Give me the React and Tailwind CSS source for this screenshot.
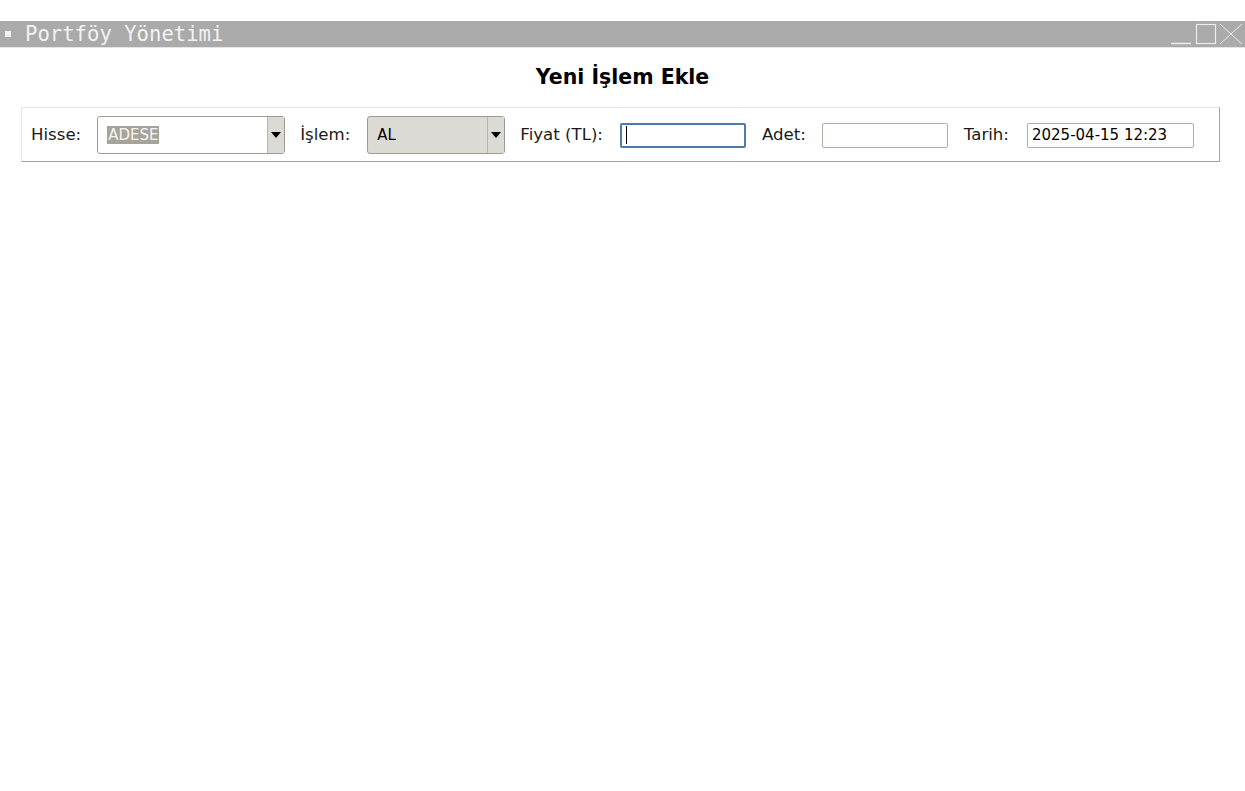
import React from "react";

const Arrow = () => (
  <svg width="10" height="6" viewBox="0 0 10 6">
    <path d="M0 0 L10 0 L5 6 Z" fill="#000" />
  </svg>
);

const Combo = ({ value, readOnly, width }) => (
  <div
    className={`flex h-[38px] items-stretch rounded-[3px] border border-[#9e9a91] ${
      readOnly ? "bg-[#dcdad5]" : "bg-white"
    }`}
    style={{ width }}
  >
    <div className="flex flex-1 items-center pl-[9px]">
      {readOnly ? (
        <span className="text-[15px] text-black">{value}</span>
      ) : (
        <span className="bg-[#a7a398] px-px text-[15px] leading-[18px] text-[#f4f4f4]">
          {value}
        </span>
      )}
    </div>
    <div className="flex w-[17px] items-center justify-center border-l border-[#b9b5ac] bg-[#dcdad5]">
      <Arrow />
    </div>
  </div>
);

const Entry = ({ value, focused, width }) => (
  <div
    className={`flex h-[25px] items-center rounded-[2px] bg-white px-[4px] text-[15px] text-black ${
      focused
        ? "border-2 border-[#5079a8]"
        : "border border-[#b3afa6]"
    }`}
    style={{ width }}
  >
    {focused && <span className="h-[18px] w-px bg-black" />}
    {value}
  </div>
);

export default function App() {
  return (
    <div
      className="h-[791px] w-[1245px] bg-white"
      style={{ fontFamily: '"DejaVu Sans", sans-serif' }}
    >
      <div className="h-[21px]" />
      {/* Window title bar */}
      <div className="flex h-[26px] items-center bg-[#aaaaaa] text-[#f2f2f2]">
        <span className="ml-[5px] mr-[14px] h-[6px] w-[6px] bg-[#f2f2f2]" />
        <span
          className="text-[20.6px] leading-none"
          style={{ fontFamily: '"DejaVu Sans Mono", monospace' }}
        >
          Portföy Yönetimi
        </span>
        <div className="ml-auto flex items-center">
          <svg width="76" height="22" viewBox="0 0 76 22">
            <path d="M2 20.5 H22" stroke="#ececec" strokeWidth="1.5" />
            <rect x="27.5" y="1.5" width="19" height="19" fill="none" stroke="#ececec" strokeWidth="1.2" />
            <path d="M51 1 L73 21 M73 1 L51 21" stroke="#ececec" strokeWidth="1" />
          </svg>
        </div>
      </div>
      <div className="h-px bg-[#e4e4e4]" />

      <div className="flex h-[59px] items-center justify-center">
        <h1 className="text-[20.5px] font-bold text-black">Yeni İşlem Ekle</h1>
      </div>

      {/* Form frame */}
      <div className="ml-[21px] flex h-[55px] w-[1199px] items-center border border-b-[#a2a2a2] border-l-[#e6e6e6] border-r-[#a2a2a2] border-t-[#e6e6e6] pl-[9px] pt-[1px] text-[16.6px] text-[#1a1a1a]">
        <span>Hisse:</span>
        <div className="ml-[16px]">
          <Combo value="ADESE" width={188} />
        </div>
        <span className="ml-[15px]">İşlem:</span>
        <div className="ml-[17px]">
          <Combo value="AL" readOnly width={138} />
        </div>
        <span className="ml-[15px]">Fiyat (TL):</span>
        <div className="ml-[17px]">
          <Entry focused width={126} />
        </div>
        <span className="ml-[16px]">Adet:</span>
        <div className="ml-[16px]">
          <Entry width={126} />
        </div>
        <span className="ml-[16px]">Tarih:</span>
        <div className="ml-[18px]">
          <Entry value="2025-04-15 12:23" width={167} />
        </div>
      </div>
    </div>
  );
}
